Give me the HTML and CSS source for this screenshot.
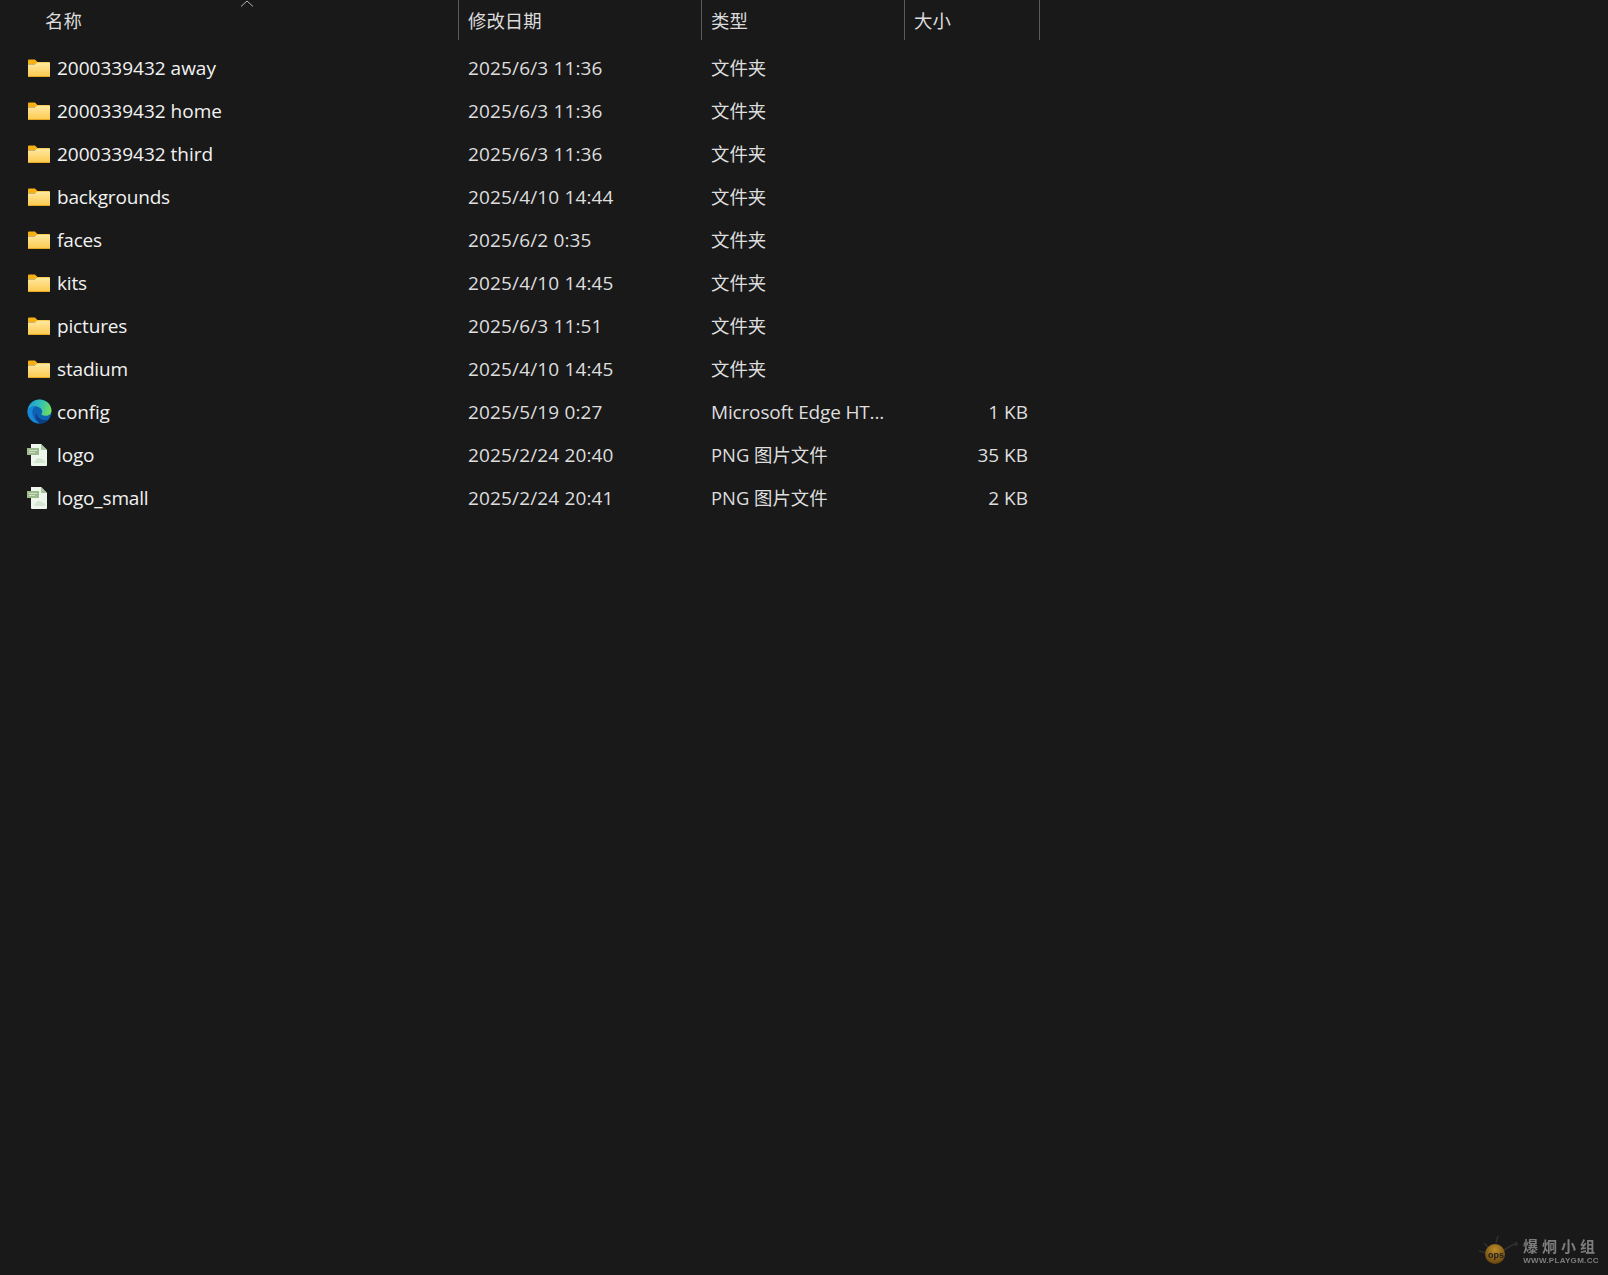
FILE: index.html
```html
<!DOCTYPE html>
<html lang="zh">
<head>
<meta charset="utf-8">
<title>文件夹</title>
<link rel="stylesheet" href="styles.css">
</head>
<body>
<svg class="defs" width="0" height="0" aria-hidden="true">
  <defs>
    <linearGradient id="fg" x1="0" y1="0" x2="0" y2="1"><stop offset="0" stop-color="#ffe9a0"/><stop offset="1" stop-color="#fcc94f"/></linearGradient>
    <linearGradient id="eg" x1="0" y1="0.3" x2="1" y2="0.5"><stop offset="0" stop-color="#1a9bdc"/><stop offset="0.55" stop-color="#36c3b0"/><stop offset="1" stop-color="#72dc5c"/></linearGradient>
    <symbol id="folder" viewBox="0 0 22 18">
      <path d="M0 1.500A1 1 0 0 1 1 .500h6l2.500 2.500H21a1 1 0 0 1 1 1V5H0z" fill="#f5b014"/>
      <path d="M0 5.200L7 5.200 9.500 3.500H21a1 1 0 0 1 1 1V17a1 1 0 0 1-1 1H1a1 1 0 0 1-1-1z" fill="url(#fg)"/>
      <path d="M0 17h22v.200a.800.800 0 0 1-.800.800H.800a.800.800 0 0 1-.800-.800z" fill="#e8a820"/>
    </symbol>
    <symbol id="edge" viewBox="0 0 26 26">
      <circle cx="13" cy="13" r="12.500" fill="#0e63b4"/>
      <path d="M.600 12C1.500 5 7 .500 13 .500c7 0 12.500 5.500 12.500 11.500 0 3.500-3 5.500-6.500 5.500-2.500 0-4-.800-4-1.800 0-.700.800-1.200.800-2.700C15.800 10 12 7.500 8.500 7.500 5 7.500 2 9.500.600 12z" fill="url(#eg)"/>
      <path d="M.600 12C3 9 6 7.500 8.500 7.500c-2.500 2-3.500 5-2.700 8.500.8 3.500 3.500 7 7.200 9.500C6 25.500.500 20 .500 13z" fill="#1787d6"/>
      <path d="M13 25.500c3.500 0 7-1.300 10-4.300-3 1-6.500.900-9-.500-2.500-1.400-4.200-3.700-4-6.700-1.700 3-1.500 6 .300 8.200z" fill="#0b3f86"/>
    </symbol>
    <symbol id="png" viewBox="0 0 20 22">
      <path d="M4 0h10l6 6v15a1 1 0 0 1-1 1H5a1 1 0 0 1-1-1z" fill="#eef7ec"/>
      <path d="M14 0l6 6h-6z" fill="#a9c59c"/>
      <path d="M7 19c1-3 3-5 5-5s3 1 4 2c1-.500 2.500.500 2.500 3z" fill="#d3e6d0"/>
      <rect x="0" y="4" width="12" height="7" fill="#9db98e"/>
      <path d="M2 6h8v1H2zM2 8h6v1H2z" fill="#cfdfc6"/>
    </symbol>
  </defs>
</svg>
<main class="explorer">
  <header class="head">
    <div class="hcell hname">名称<span class="sort"><svg width="14" height="7" viewBox="0 0 14 7"><path d="M1 6.500L7 1l6 5.500" fill="none" stroke="#b5b5b5" stroke-width="1"/></svg></span></div>
    <div class="hcell">修改日期</div>
    <div class="hcell">类型</div>
    <div class="hcell">大小</div>
  </header>
  <div class="list">
    <div class="row"><div class="name"><svg class="ic"><use href="#folder"/></svg>2000339432 away</div><div class="cell date">2025/6/3 11:36</div><div class="cell cjk">文件夹</div><div class="size"></div></div>
    <div class="row"><div class="name"><svg class="ic"><use href="#folder"/></svg>2000339432 home</div><div class="cell date">2025/6/3 11:36</div><div class="cell cjk">文件夹</div><div class="size"></div></div>
    <div class="row"><div class="name"><svg class="ic"><use href="#folder"/></svg>2000339432 third</div><div class="cell date">2025/6/3 11:36</div><div class="cell cjk">文件夹</div><div class="size"></div></div>
    <div class="row"><div class="name word"><svg class="ic"><use href="#folder"/></svg>backgrounds</div><div class="cell date">2025/4/10 14:44</div><div class="cell cjk">文件夹</div><div class="size"></div></div>
    <div class="row"><div class="name word"><svg class="ic"><use href="#folder"/></svg>faces</div><div class="cell date">2025/6/2 0:35</div><div class="cell cjk">文件夹</div><div class="size"></div></div>
    <div class="row"><div class="name word"><svg class="ic"><use href="#folder"/></svg>kits</div><div class="cell date">2025/4/10 14:45</div><div class="cell cjk">文件夹</div><div class="size"></div></div>
    <div class="row"><div class="name word"><svg class="ic"><use href="#folder"/></svg>pictures</div><div class="cell date">2025/6/3 11:51</div><div class="cell cjk">文件夹</div><div class="size"></div></div>
    <div class="row"><div class="name word"><svg class="ic"><use href="#folder"/></svg>stadium</div><div class="cell date">2025/4/10 14:45</div><div class="cell cjk">文件夹</div><div class="size"></div></div>
    <div class="row"><div class="name word"><svg class="ic ic-edge"><use href="#edge"/></svg>config</div><div class="cell date">2025/5/19 0:27</div><div class="cell word">Microsoft Edge HT...</div><div class="size">1 KB</div></div>
    <div class="row"><div class="name word"><svg class="ic ic-png"><use href="#png"/></svg>logo</div><div class="cell date">2025/2/24 20:40</div><div class="cell cjk">PNG 图片文件</div><div class="size">35 KB</div></div>
    <div class="row"><div class="name word"><svg class="ic ic-png"><use href="#png"/></svg>logo_small</div><div class="cell date">2025/2/24 20:41</div><div class="cell cjk">PNG 图片文件</div><div class="size">2 KB</div></div>
  </div>
</main>
<aside class="mark">
  <svg class="mark-logo" width="42" height="34" viewBox="0 0 42 34">
    <defs><radialGradient id="ball" cx="0.5" cy="0.3" r="0.8"><stop offset="0" stop-color="#d8a02e"/><stop offset="1" stop-color="#6a4208"/></radialGradient></defs>
    <path d="M7 9l6 6M21 2l-2 7M2 17l7 2M27 16l10-6" stroke="#333" stroke-width="1.500" fill="none"/>
    <circle cx="39" cy="10" r="2" fill="#333"/>
    <circle cx="18" cy="20" r="10" fill="url(#ball)"/>
    <text class="mark-ops" x="19" y="24">ops</text>
  </svg>
  <div class="mark-text"><span class="mark-cn">爆炯小组</span><span class="mark-en">WWW.PLAYGM.CC</span></div>
</aside>
</body>
</html>
```
FILE: styles.css
```css
html, body { margin: 0; height: 100%; }
body {
  background: #191919;
  color: #f2f2f2;
  font-family: "Open Sans", "Noto Sans CJK SC", sans-serif;
  font-size: 19px;
  overflow: hidden;
  position: relative;
}
.defs { position: absolute; }
.explorer { width: 1040px; }
.head, .row {
  display: grid;
  grid-template-columns: 459px 243px 203px 135px;
}
.head { grid-template-rows: 40px; margin-bottom: 6px; }
.hcell {
  border-right: 1px solid #5a5a5a;
  color: #dcdcdc;
  font-size: 18.4px;
  line-height: 41px;
  padding-left: 9px;
  box-sizing: border-box;
  position: relative;
}
.hname { padding-left: 45px; }
.sort { position: absolute; left: 240px; top: 0; line-height: 0; }
.row { height: 43px; align-items: center; }
.name { display: flex; align-items: center; padding-left: 28px; white-space: nowrap; }
.word { letter-spacing: -.16px; }
.ic { width: 22px; height: 18px; margin-right: 7px; flex: none; }
.ic-edge { width: 25px; height: 25px; margin: 0 5px 0 -1px; }
.ic-png { width: 20px; height: 22px; margin: 0 10px 0 -1px; }
.cell { padding-left: 9px; color: #dedede; white-space: nowrap; }
.date { letter-spacing: .15px; }
.cjk { font-size: 18.4px; padding-bottom: 2px; }
.size { padding-right: 12px; text-align: right; color: #dedede; }
.mark {
  position: absolute;
  right: 9px;
  bottom: 7px;
  display: flex;
  align-items: center;
  gap: 4px;
  opacity: .85;
  filter: blur(.4px);
}
.mark-ops { font-family: "Liberation Sans", sans-serif; font-size: 9px; font-weight: 700; fill: #222; text-anchor: middle; }
.mark-text { display: flex; flex-direction: column; align-items: center; color: #8f8f8f; }
.mark-cn { font-size: 15px; line-height: 19px; letter-spacing: 4px; font-weight: 700; }
.mark-en { font-family: "Liberation Sans", sans-serif; font-size: 8px; line-height: 9px; font-weight: 700; letter-spacing: .3px; }
```
